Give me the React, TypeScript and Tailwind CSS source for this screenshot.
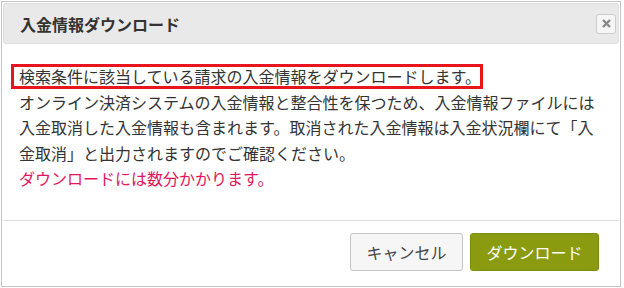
import React from "react";

const font = { fontFamily: '"Noto Sans CJK JP", "Noto Sans", sans-serif' };

export default function App() {
  return (
    <div className="w-[624px] h-[288px] bg-white pl-px pt-px" style={font}>
      <div className="w-[620px] h-[286px] border border-[#c5c5c5] p-px flex flex-col">
        <div className="h-[41px] border border-[#dddddd] rounded-[3px] bg-[#e9e9e9] flex items-center justify-between pl-[16px] pr-[2px]">
          <span className="text-[16px] font-bold text-[#333333] leading-none">入金情報ダウンロード</span>
          <button className="w-[20px] h-[20px] border border-[#cccccc] rounded-[3px] bg-[#f6f6f6] flex items-center justify-center">
            <svg width="9" height="9" viewBox="0 0 9 9">
              <path d="M1 1 L8 8 M8 1 L1 8" stroke="#888888" strokeWidth="2.4" />
            </svg>
          </button>
        </div>
        <div className="flex-1 pt-[20px] pl-[16px] pr-[10px] text-[16px] leading-[25.5px] text-[#333333]">
          <div className="relative">
            <span>検索条件に該当している請求の入金情報をダウンロードします。</span>
            <span className="absolute left-[-8px] top-0 w-[472px] h-[25px] border-[3px] border-[#e8141e] pointer-events-none" />
          </div>
          <div>オンライン決済システムの入金情報と整合性を保つため、入金情報ファイルには入金取消した入金情報も含まれます。取消された入金情報は入金状況欄にて「入金取消」と出力されますのでご確認ください。</div>
          <div className="text-[#e3165b]">ダウンロードには数分かかります。</div>
        </div>
        <div className="h-[65px] border-t border-[#dddddd] flex justify-end items-start pt-[12px] pr-[20px] gap-[7px]">
          <button className="w-[113px] h-[38px] border border-[#c5c5c5] rounded-[3px] bg-[#f6f6f6] text-[16px] text-[#454545]">キャンセル</button>
          <button className="w-[129px] h-[38px] border border-[#7e8c0c] rounded-[3px] bg-[#8a9b10] text-[16px] text-white">ダウンロード</button>
        </div>
      </div>
    </div>
  );
}
